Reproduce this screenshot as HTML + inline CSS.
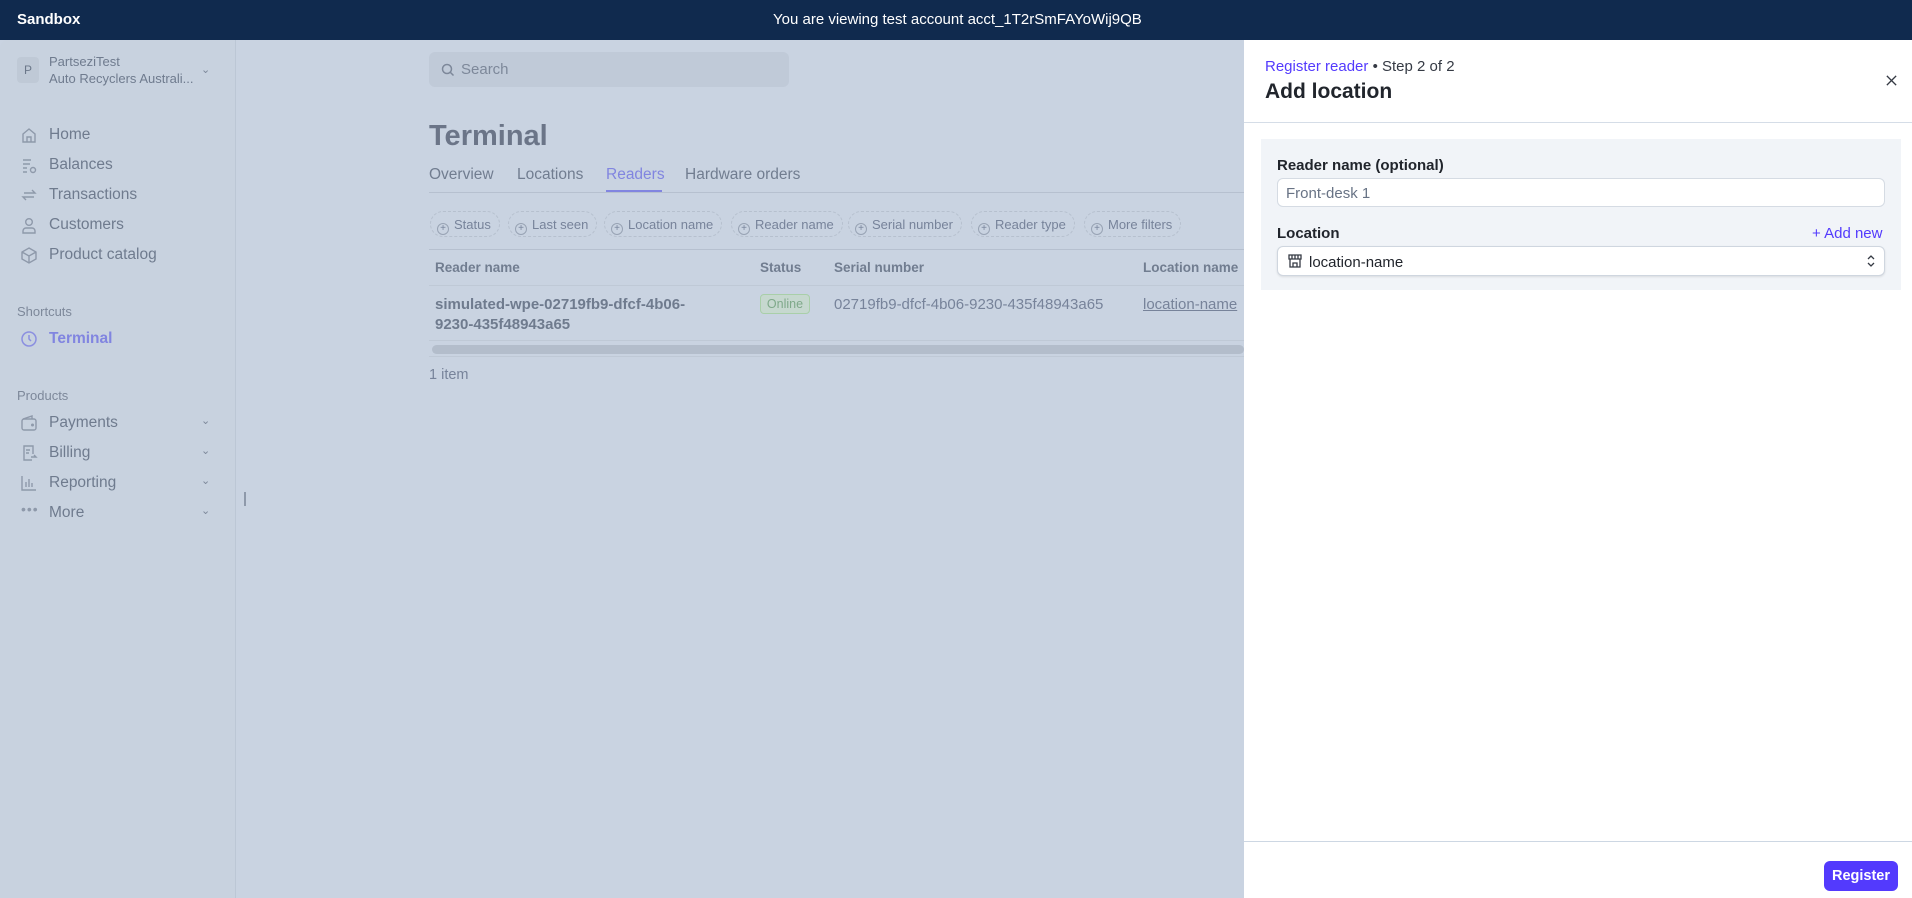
<!DOCTYPE html>
<html><head><meta charset="utf-8"><style>
*{box-sizing:border-box;margin:0;padding:0}
body{width:1912px;height:898px;overflow:hidden;font-family:"Liberation Sans",sans-serif;background:#c9d3e1;position:relative;color:#6b7789}
.a{position:absolute;white-space:nowrap}
.top{left:0;top:0;width:1912px;height:40px;background:#102a4e;color:#fff;font-size:15px}
.side{left:0;top:40px;width:236px;height:858px;background:#c8d2df;border-right:1px solid #bcc7d5;border-top-left-radius:8px}
.nav{font-size:15.5px;color:#6f7b8e;left:49px}
.ic{left:20px;width:18px;height:18px}
.chev{left:201px;font-size:11px;color:#7d889a}
.pill{top:211px;height:26px;border:1px dashed #b6c0ce;border-radius:13px;font-size:13px;color:#77839a;padding:0 8px 0 6px;line-height:25px}
.pill span{display:inline-block;width:12px;height:12px;border:1px solid #98a3b4;border-radius:50%;font-size:10px;line-height:10px;text-align:center;margin-right:5px;vertical-align:-2px}
.th{top:260px;font-size:13.5px;font-weight:bold;color:#717d90}
.panel{left:1244px;top:40px;width:668px;height:858px;background:#fff}
</style></head><body>
<div class="a top"><div class="a" style="left:17px;top:11px;font-weight:bold">Sandbox</div><div class="a" style="left:773px;top:11px">You are viewing test account acct_1T2rSmFAYoWij9QB</div></div>
<div class="a side"></div>
<div class="a" style="left:17px;top:57px;width:22px;height:26px;background:#bfc9d6;border-radius:4px;font-size:12px;color:#6b7789;padding:6px 0 0 7px">P</div>
<div class="a" style="left:49px;top:54px;font-size:13px;color:#6f7b8e">PartseziTest</div>
<div class="a" style="left:49px;top:71px;font-size:13px;color:#6f7b8e">Auto Recyclers Australi...</div>
<div class="a chev" style="top:63px">&#8964;</div>
<svg class="a ic" style="top:126px" viewBox="0 0 18 18" fill="none" stroke="#8e99aa" stroke-width="1.4"><path d="M3 8l6-5 6 5v8H3z M7 16v-5h4v5"/></svg>
<div class="a nav" style="top:126px">Home</div>
<svg class="a ic" style="top:156px" viewBox="0 0 18 18" fill="none" stroke="#8e99aa" stroke-width="1.4"><path d="M3 4h8M3 8h7M3 12h4M3 16h4"/><circle cx="13" cy="14" r="2.5"/></svg>
<div class="a nav" style="top:156px">Balances</div>
<svg class="a ic" style="top:186px" viewBox="0 0 18 18" fill="none" stroke="#8e99aa" stroke-width="1.4"><path d="M4 7h11l-3-3M14 11H3l3 3"/></svg>
<div class="a nav" style="top:186px">Transactions</div>
<svg class="a ic" style="top:216px" viewBox="0 0 18 18" fill="none" stroke="#8e99aa" stroke-width="1.4"><circle cx="9" cy="6" r="3.3"/><path d="M3 17v-2a3 3 0 013-3h6a3 3 0 013 3v2z"/></svg>
<div class="a nav" style="top:216px">Customers</div>
<svg class="a ic" style="top:246px" viewBox="0 0 18 18" fill="none" stroke="#8e99aa" stroke-width="1.4"><path d="M9 2l7 4v7l-7 4-7-4V6z M2 6l7 4 7-4 M9 10v7"/></svg>
<div class="a nav" style="top:246px">Product catalog</div>
<div class="a" style="left:17px;top:304px;font-size:13px;color:#7d889a">Shortcuts</div>
<svg class="a ic" style="top:330px" viewBox="0 0 18 18" fill="none" stroke="#8b8fe0" stroke-width="1.5"><circle cx="9" cy="9" r="7"/><path d="M9 5v4l2 2"/></svg>
<div class="a nav" style="top:330px;color:#8185e0;font-weight:bold">Terminal</div>
<div class="a" style="left:17px;top:388px;font-size:13px;color:#7d889a">Products</div>
<svg class="a ic" style="top:414px" viewBox="0 0 18 18" fill="none" stroke="#8e99aa" stroke-width="1.4"><rect x="2" y="5" width="14" height="11" rx="2"/><path d="M3 5l9-3v3"/><circle cx="12.5" cy="11" r=".8"/></svg>
<div class="a nav" style="top:414px">Payments</div><div class="a chev" style="top:414px">&#8964;</div>
<svg class="a ic" style="top:444px" viewBox="0 0 18 18" fill="none" stroke="#8e99aa" stroke-width="1.4"><path d="M12 16H4V2h9v8M6 6h4M6 9h3M11 13h5l-2-2"/></svg>
<div class="a nav" style="top:444px">Billing</div><div class="a chev" style="top:444px">&#8964;</div>
<svg class="a ic" style="top:474px" viewBox="0 0 18 18" fill="none" stroke="#8e99aa" stroke-width="1.4"><path d="M2 2v14h14M6 13V8M9 13V5M12 13V9"/></svg>
<div class="a nav" style="top:474px">Reporting</div><div class="a chev" style="top:474px">&#8964;</div>
<div class="a" style="left:21px;top:501px;font-size:14px;color:#8e99aa;letter-spacing:1px">&#8226;&#8226;&#8226;</div>
<div class="a nav" style="top:504px">More</div><div class="a chev" style="top:504px">&#8964;</div>
<div class="a" style="left:244px;top:492px;width:2px;height:14px;background:#8e99aa"></div>

<div class="a" style="left:429px;top:52px;width:360px;height:35px;background:#c0cad8;border-radius:6px"></div>
<svg class="a" style="left:441px;top:63px" width="14" height="14" viewBox="0 0 14 14" fill="none" stroke="#7d889a" stroke-width="1.5"><circle cx="6" cy="6" r="4.5"/><path d="M9.5 9.5l3 3"/></svg>
<div class="a" style="left:461px;top:61px;font-size:15px;color:#7d889a">Search</div>
<div class="a" style="left:429px;top:120px;font-size:29px;font-weight:bold;color:#6b7588">Terminal</div>
<div class="a" style="left:429px;top:166px;font-size:15.5px;color:#717d90">Overview</div>
<div class="a" style="left:517px;top:166px;font-size:15.5px;color:#717d90">Locations</div>
<div class="a" style="left:606px;top:166px;font-size:15.5px;color:#8185e0">Readers</div>
<div class="a" style="left:685px;top:166px;font-size:15.5px;color:#717d90">Hardware orders</div>
<div class="a" style="left:429px;top:192px;width:815px;height:1px;background:#b6c0cf"></div>
<div class="a" style="left:606px;top:190px;width:56px;height:2px;background:#8185e0"></div>
<div class="a pill" style="left:430px"><span>+</span>Status</div>
<div class="a pill" style="left:508px"><span>+</span>Last seen</div>
<div class="a pill" style="left:604px"><span>+</span>Location name</div>
<div class="a pill" style="left:731px"><span>+</span>Reader name</div>
<div class="a pill" style="left:848px"><span>+</span>Serial number</div>
<div class="a pill" style="left:971px"><span>+</span>Reader type</div>
<div class="a pill" style="left:1084px"><span>+</span>More filters</div>
<div class="a" style="left:429px;top:249px;width:815px;height:1px;background:#b6c0cf"></div>
<div class="a th" style="left:435px">Reader name</div>
<div class="a th" style="left:760px">Status</div>
<div class="a th" style="left:834px">Serial number</div>
<div class="a th" style="left:1143px">Location name</div>
<div class="a" style="left:429px;top:285px;width:815px;height:1px;background:#bfc9d6"></div>
<div class="a" style="left:435px;top:295px;font-size:15px;font-weight:bold;color:#6f7b8e;line-height:20px">simulated-wpe-02719fb9-dfcf-4b06-<br>9230-435f48943a65</div>
<div class="a" style="left:760px;top:294px;width:50px;height:20px;border:1px solid #a9cfa9;border-radius:4px;background:#c6d8cf;font-size:12.5px;color:#7fa98a;text-align:center;line-height:18px">Online</div>
<div class="a" style="left:834px;top:296px;font-size:15px;color:#77839a">02719fb9-dfcf-4b06-9230-435f48943a65</div>
<div class="a" style="left:1143px;top:296px;font-size:15px;color:#77839a;text-decoration:underline">location-name</div>
<div class="a" style="left:429px;top:340px;width:815px;height:1px;background:#bfc9d6"></div>
<div class="a" style="left:432px;top:345px;width:812px;height:9px;background:#b3bdcb;border-radius:5px"></div>
<div class="a" style="left:429px;top:356px;width:815px;height:1px;background:#bfc9d6"></div>
<div class="a" style="left:429px;top:367px;font-size:14.5px;color:#77839a">1 item</div>

<div class="a panel">
<div class="a" style="left:21px;top:18px;font-size:15px;color:#533afd">Register reader <span style="color:#353a44">&#8226; Step 2 of 2</span></div>
<div class="a" style="left:21px;top:40px;font-size:21px;font-weight:bold;color:#21252c">Add location</div>
<svg class="a" style="left:641px;top:34px" width="13" height="13" viewBox="0 0 14 14" stroke="#353a44" stroke-width="1.4"><path d="M2 2l10 10M12 2L2 12"/></svg>
<div class="a" style="left:0;top:82px;width:668px;height:1px;background:#d5dde7"></div>
<div class="a" style="left:17px;top:99px;width:640px;height:151px;background:#f1f4f8"></div>
<div class="a" style="left:33px;top:117px;font-size:15px;font-weight:bold;color:#21252c">Reader name (optional)</div>
<div class="a" style="left:33px;top:138px;width:608px;height:29px;background:#fff;border:1px solid #d5dbe3;border-radius:6px;font-size:15px;color:#687385;padding:6px 8px">Front-desk 1</div>
<div class="a" style="left:33px;top:185px;font-size:15px;font-weight:bold;color:#21252c">Location</div>
<div class="a" style="left:568px;top:185px;font-size:15px;color:#533afd">+ Add new</div>
<div class="a" style="left:33px;top:206px;width:608px;height:30px;background:#fff;border:1px solid #cfd6df;border-radius:6px;box-shadow:0 1px 2px rgba(0,0,0,.1)"></div>
<svg class="a" style="left:43px;top:213px" width="16" height="16" viewBox="0 0 16 16" fill="none" stroke="#353a44" stroke-width="1.3"><path d="M2 2h12v4H2z M5 2v4M8 2v4M11 2v4 M3 6v8h10V6 M6 14v-4h4v4"/></svg>
<div class="a" style="left:65px;top:214px;font-size:15px;color:#21252c">location-name</div>
<svg class="a" style="left:622px;top:214px" width="10" height="14" viewBox="0 0 10 14" fill="none" stroke="#353a44" stroke-width="1.3"><path d="M2 5l3-3 3 3M2 9l3 3 3-3"/></svg>
<div class="a" style="left:0;top:801px;width:668px;height:1px;background:#cdd7e3"></div>
<div class="a" style="left:580px;top:821px;width:74px;height:30px;background:#533afd;border-radius:6px;color:#fff;font-size:14.5px;font-weight:bold;text-align:center;line-height:30px">Register</div>
</div>
</body></html>
